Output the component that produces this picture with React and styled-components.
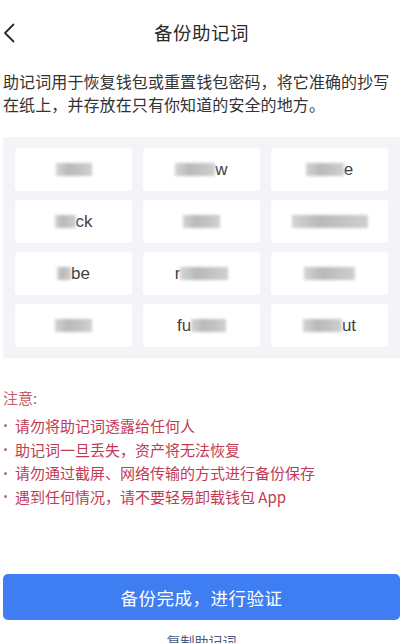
import React from "react";
import styled, { createGlobalStyle } from "styled-components";

const Global = createGlobalStyle`
  html, body { margin: 0; padding: 0; background: #ffffff; }
  body { font-family: "Noto Sans CJK SC", "Noto Sans", "Liberation Sans", sans-serif; }
  * { box-sizing: border-box; }
`;

const Page = styled.div`
  width: 414px;
  height: 643px;
  overflow: hidden;
  padding: 0 14px 0 3px;
  display: flex;
  flex-direction: column;
  background: #fff;
`;

const Header = styled.div`
  position: relative;
  height: 64px;
  display: flex;
  align-items: center;
  justify-content: center;
`;

const Back = styled.button`
  position: absolute;
  left: 0;
  top: 22px;
  width: 14px;
  height: 22px;
  padding: 0;
  border: 0;
  background: none;
  display: flex;
  align-items: center;
`;

const Title = styled.h1`
  margin: 0;
  font-size: 18.5px;
  font-weight: 400;
  color: #2a2a2a;
  letter-spacing: 0.5px;
  line-height: 24px;
`;

const Desc = styled.p`
  margin: 6px 0 0;
  font-size: 16px;
  line-height: 23px;
  color: #333;
  letter-spacing: 0.1px;
`;

const Panel = styled.div`
  margin-top: 21px;
  background: #f3f4f8;
  padding: 11px 12px;
  display: grid;
  grid-template-columns: repeat(3, 117px);
  grid-auto-rows: 43px;
  column-gap: 11px;
  row-gap: 9px;
`;

const Cell = styled.div`
  background: #fff;
  border-radius: 4px;
  display: flex;
  align-items: center;
  justify-content: center;
  font-family: "Liberation Sans", "Noto Sans", sans-serif;
  font-size: 17px;
  color: #3f3f3f;
`;

const Blur = styled.span`
  display: inline-block;
  width: ${(p) => p.$w}px;
  height: 13px;
  background: linear-gradient(90deg, #d4d4d4, #b9b9b9 35%, #c4c4c4 70%, #cfcfcf);
  filter: blur(1.5px);
`;

const Notice = styled.div`
  margin-top: 28px;
  display: flex;
  flex-direction: column;
`;

const NoticeTitle = styled.div`
  font-size: 15px;
  line-height: 24px;
  color: #c65a6a;
`;

const NoticeList = styled.ul`
  list-style: none;
  margin: 4px 0 0;
  padding: 0;
`;

const NoticeItem = styled.li`
  font-size: 15px;
  line-height: 23.7px;
  color: #c23a55;
  display: flex;
  align-items: center;
  &::before {
    content: "";
    width: 3px;
    height: 3px;
    border-radius: 50%;
    background: #b86a78;
    margin: 0 8px 0 1px;
    flex: none;
  }
`;

const Spacer = styled.div`
  flex: 1;
`;

const PrimaryButton = styled.button`
  height: 46px;
  width: 100%;
  border: 0;
  border-radius: 5px;
  background: #3e7df2;
  color: #fff;
  font-family: inherit;
  font-size: 17.5px;
  letter-spacing: 0.5px;
  display: flex;
  align-items: center;
  justify-content: center;
  flex: none;
`;

const CopyLink = styled.div`
  margin-top: 9px;
  height: 24px;
  text-align: center;
  font-size: 14px;
  line-height: 24px;
  color: #4a5b7c;
  flex: none;
  margin-bottom: -10px;
`;

const words = [
  [{ b: 36 }],
  [{ b: 40 }, { t: "w" }],
  [{ b: 38 }, { t: "e" }],
  [{ b: 21 }, { t: "ck" }],
  [{ b: 37 }],
  [{ b: 76 }],
  [{ b: 14 }, { t: "be" }],
  [{ t: "r" }, { b: 48 }],
  [{ b: 51 }],
  [{ b: 37 }],
  [{ t: "fu" }, { b: 35 }],
  [{ b: 39 }, { t: "ut" }],
];

const notes = [
  "请勿将助记词透露给任何人",
  "助记词一旦丢失，资产将无法恢复",
  "请勿通过截屏、网络传输的方式进行备份保存",
  "遇到任何情况，请不要轻易卸载钱包 App",
];

export default function App() {
  return (
    <>
      <Global />
      <Page>
        <Header>
          <Back aria-label="返回">
            <svg width="12" height="20" viewBox="0 0 12 20" fill="none">
              <path d="M10.5 1.5 L2 10 L10.5 18.5" stroke="#2a2a2a" strokeWidth="1.8" strokeLinecap="round" strokeLinejoin="round" />
            </svg>
          </Back>
          <Title>备份助记词</Title>
        </Header>
        <Desc>
          助记词用于恢复钱包或重置钱包密码，将它准确的抄写在纸上，并存放在只有你知道的安全的地方。
        </Desc>
        <Panel>
          {words.map((parts, i) => (
            <Cell key={i}>
              {parts.map((p, j) => (p.b ? <Blur key={j} $w={p.b} /> : <span key={j}>{p.t}</span>))}
            </Cell>
          ))}
        </Panel>
        <Notice>
          <NoticeTitle>注意:</NoticeTitle>
          <NoticeList>
            {notes.map((n) => (
              <NoticeItem key={n}>{n}</NoticeItem>
            ))}
          </NoticeList>
        </Notice>
        <Spacer />
        <PrimaryButton>备份完成，进行验证</PrimaryButton>
        <CopyLink>复制助记词</CopyLink>
      </Page>
    </>
  );
}
